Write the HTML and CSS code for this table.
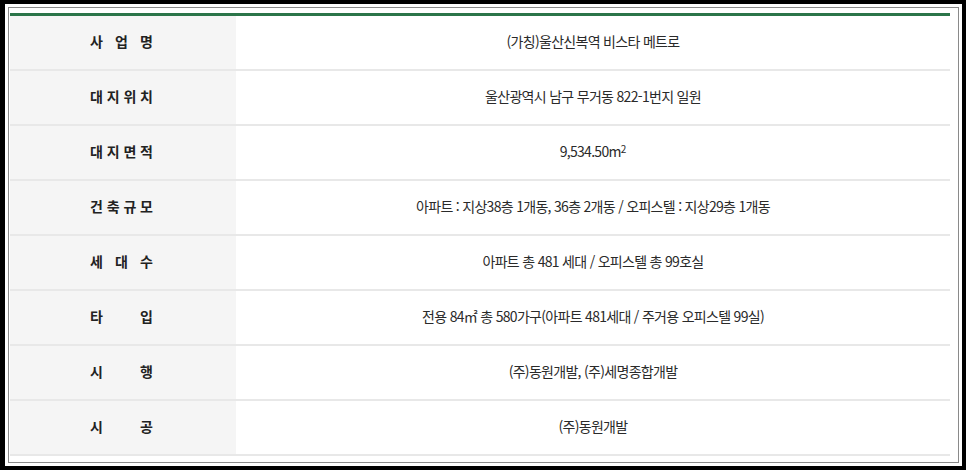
FILE: index.html
```html
<!DOCTYPE html>
<html lang="ko">
<head>
<meta charset="utf-8">
<link rel="stylesheet" href="styles.css">
</head>
<body>
<div class="frame">
  <div class="inner">
    <div class="table">
      <div class="row"><div class="th"><span class="lbl"><i>사</i><i>업</i><i>명</i></span></div><div class="td">(가칭)울산신복역 비스타 메트로</div></div>
      <div class="row"><div class="th"><span class="lbl"><i>대</i><i>지</i><i>위</i><i>치</i></span></div><div class="td">울산광역시 남구 무거동 822-1번지 일원</div></div>
      <div class="row"><div class="th"><span class="lbl"><i>대</i><i>지</i><i>면</i><i>적</i></span></div><div class="td">9,534.50m<sup>2</sup></div></div>
      <div class="row"><div class="th"><span class="lbl"><i>건</i><i>축</i><i>규</i><i>모</i></span></div><div class="td">아파트 : 지상38층 1개동, 36층 2개동 / 오피스텔 : 지상29층 1개동</div></div>
      <div class="row"><div class="th"><span class="lbl"><i>세</i><i>대</i><i>수</i></span></div><div class="td">아파트 총 481 세대 / 오피스텔 총 99호실</div></div>
      <div class="row"><div class="th"><span class="lbl"><i>타</i><i>입</i></span></div><div class="td">전용 84㎡ 총 580가구(아파트 481세대 / 주거용 오피스텔 99실)</div></div>
      <div class="row"><div class="th"><span class="lbl"><i>시</i><i>행</i></span></div><div class="td">(주)동원개발, (주)세명종합개발</div></div>
      <div class="row"><div class="th"><span class="lbl"><i>시</i><i>공</i></span></div><div class="td">(주)동원개발</div></div>
    </div>
  </div>
</div>
</body>
</html>
```
FILE: styles.css
```css
html, body {
  margin: 0;
  padding: 0;
  background: #000;
}
body {
  width: 966px;
  height: 470px;
  overflow: hidden;
  font-family: "Noto Sans CJK KR", "Noto Sans", sans-serif;
}
.frame {
  margin: 4px 0 0 5px;
  width: 957px;
  height: 462px;
  box-sizing: border-box;
  background: #fff;
  padding: 3px;
}
.inner {
  height: 100%;
  box-sizing: border-box;
  border: 1px solid #8a8a8a;
  padding: 5px 8px 0 1px;
}
.table {
  border-top: 3px solid #2b7549;
}
.row {
  display: flex;
  height: 55px;
  box-sizing: border-box;
  border-bottom: 2px solid #e8e8e8;
}
.th {
  width: 226px;
  background: #f5f5f5;
  display: flex;
  align-items: center;
  justify-content: center;
  padding-bottom: 3px;
  box-sizing: border-box;
}
.lbl {
  display: flex;
  justify-content: space-between;
  width: 63px;
  font-size: 14px;
  font-weight: 700;
  color: #222;
  padding-right: 3px;
}
.lbl i {
  font-style: normal;
}
.td {
  flex: 1;
  display: flex;
  align-items: center;
  justify-content: center;
  font-size: 14px;
  letter-spacing: -0.7px;
  color: #2a2a2a;
  background: #fff;
  padding-bottom: 3px;
}
.td sup {
  font-size: 10px;
  line-height: 0;
  position: relative;
  top: -2px;
  letter-spacing: 0;
}
```
